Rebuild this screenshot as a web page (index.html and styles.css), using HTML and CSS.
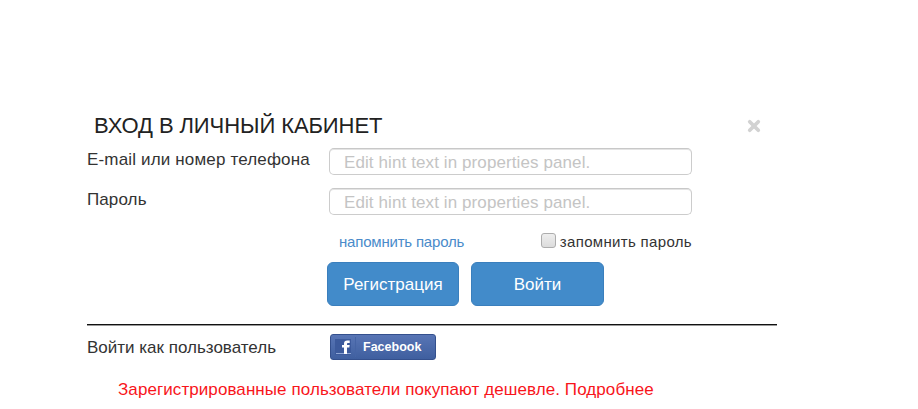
FILE: index.html
```html
<!DOCTYPE html>
<html lang="ru">
<head>
<meta charset="utf-8">
<title>Вход в личный кабинет</title>
<link rel="stylesheet" href="styles.css">
</head>
<body>
<main class="login">
  <header class="header">
    <h1 class="title">ВХОД В ЛИЧНЫЙ КАБИНЕТ</h1>
    <svg class="close" viewBox="0 0 14 14" role="img"><path d="M2.700 2.700 11.300 11.300M11.300 2.700 2.700 11.300"/></svg>
  </header>
  <form class="form">
    <div class="field">
      <label class="label label-email" for="email">E-mail или номер телефона</label>
      <input class="input" id="email" type="text" placeholder="Edit hint text in properties panel.">
    </div>
    <div class="field">
      <label class="label label-password" for="password">Пароль</label>
      <input class="input" id="password" type="text" placeholder="Edit hint text in properties panel.">
    </div>
    <div class="options">
      <a class="remind">напомнить пароль</a>
      <label class="remember"><input class="checkbox" type="checkbox"><span>запомнить пароль</span></label>
    </div>
    <div class="actions">
      <button class="button" type="button"><span class="register">Регистрация</span></button>
      <button class="button" type="button"><span class="enter">Войти</span></button>
    </div>
  </form>
  <section class="social">
    <span class="label label-social">Войти как пользователь</span>
    <button class="facebook" type="button">
      <svg class="facebook-icon" viewBox="0 0 25 24">
        <path class="facebook-tile" d="M4 4h16v16H4z"/>
        <path class="facebook-line" d="M5 18.500h15"/>
        <path class="facebook-edge" d="M24.500 2v20"/>
        <path class="facebook-mark" d="M13 19v-6.500h-2v-2.500h2v-1.200c0-2.300 1.200-3.300 3.200-3.300h2.500v2.500h-1.500c-.8 0-1.200.3-1.200 1v1h2.700l-.4 2.500h-2.300v6.500z"/>
      </svg>
      <span class="facebook-name">Facebook</span>
    </button>
  </section>
  <p class="notice">Зарегистрированные пользователи покупают дешевле. Подробнее</p>
</main>
</body>
</html>
```

FILE: styles.css
```css
* { box-sizing: border-box; }

body {
  margin: 0;
  background: #fff;
  color: #333;
  font-family: "Liberation Sans", Arial, sans-serif;
  font-size: 17px;
}

.login {
  width: 690px;
  height: 409px;
  margin-left: 87px;
  padding-top: 112px;
  overflow: hidden;
  white-space: nowrap;
}

.header {
  display: flex;
  justify-content: space-between;
  height: 36px;
  padding: 0 16px 0 7px;
}

.title {
  margin: 0;
  font-size: 22px;
  font-weight: 400;
  line-height: 27px;
  letter-spacing: -0.08px;
  color: #222;
}

.close {
  width: 14px;
  height: 14px;
  margin-top: 7px;
  fill: none;
  stroke: #d2d2d2;
  stroke-width: 3.7;
  stroke-linecap: round;
}

.field {
  display: flex;
  height: 27px;
  margin-bottom: 13px;
}

.label {
  width: 242px;
  line-height: 23px;
}

.label-email { letter-spacing: 0.16px; }

.label-password { letter-spacing: 0.1px; }

.input {
  width: 363px;
  height: 27px;
  padding: 2px 14px 0;
  border: 1px solid #ccc;
  border-top-color: #c8c8c8;
  border-radius: 5px;
  box-shadow: inset 0 1px 0 #e4e4e4;
  background: #fff;
  font: 17px "Liberation Sans", Arial, sans-serif;
  letter-spacing: 0.1px;
  outline: 0;
}

.input::placeholder { color: #c4c4c4; opacity: 1; }

.options {
  display: flex;
  justify-content: space-between;
  align-items: center;
  width: 605px;
  height: 26px;
  padding-left: 252px;
  font-size: 15px;
}

.remind { color: #4a8bca; letter-spacing: -0.2px; }

.remember {
  display: flex;
  align-items: center;
  gap: 4px;
  letter-spacing: 0.33px;
}

.checkbox {
  appearance: none;
  width: 15px;
  height: 15px;
  margin: 0 0 2px;
  border: 1px solid #adadad;
  border-radius: 3px;
  background: linear-gradient(#eee, #dcdcdc);
}

.actions {
  display: flex;
  gap: 12px;
  padding: 8px 0 0 240px;
}

.button {
  width: 132px;
  height: 44px;
  padding: 1px 0 0;
  border: 1px solid #3a7fbd;
  border-radius: 6px;
  background: #428bca;
  color: #fff;
  font: 17px "Liberation Sans", Arial, sans-serif;
}

.button + .button { width: 133px; }

.social {
  display: flex;
  height: 46px;
  margin-top: 18px;
  padding-top: 9px;
  border-top: 1px solid #111;
  box-shadow: inset 0 1px 0 #999;
}

.label-social { width: 243px; line-height: 27px; }

.facebook {
  display: flex;
  align-items: center;
  width: 106px;
  height: 26px;
  padding: 0;
  border: 1px solid #34508d;
  border-radius: 3px;
  background: linear-gradient(#5875b5, #3f5f9f);
  color: #fff;
  font: bold 12.5px "Liberation Sans", Arial, sans-serif;
}

.facebook-icon { width: 25px; height: 24px; margin-right: 7px; }
.facebook-tile { fill: #3c5a9c; }
.facebook-line { fill: none; stroke: #8ea6d4; }
.facebook-edge { fill: none; stroke: #4564a5; }
.facebook-mark { fill: #fff; }

.notice {
  margin: 0;
  padding-left: 31px;
  line-height: 40px;
  letter-spacing: 0.08px;
  color: #f8151b;
}
```
